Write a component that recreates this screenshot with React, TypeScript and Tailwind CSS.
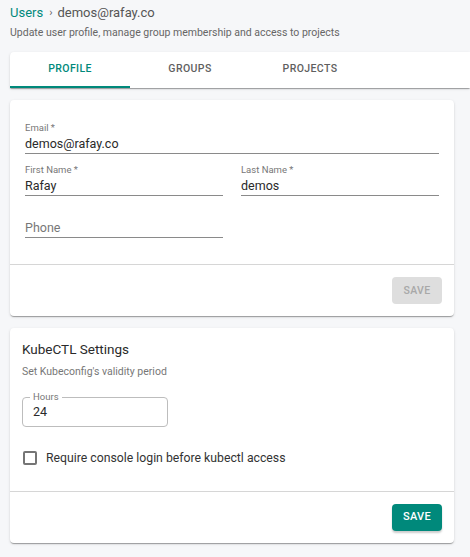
import { FC } from "react";

const cardShadow =
  "shadow-[0_2px_1px_-1px_rgba(0,0,0,0.2),0_1px_1px_0_rgba(0,0,0,0.14),0_1px_3px_0_rgba(0,0,0,0.12)]";

interface FieldProps {
  label?: string;
  value?: string;
  placeholder?: string;
  className?: string;
}

const UnderlineField: FC<FieldProps> = ({ label, value, placeholder, className }) => (
  <div className={className}>
    <div className="h-[12px] text-[9.5px] leading-[12px] text-[#777]">{label}</div>
    <div
      className={`h-[20px] border-b border-[#8a8a8a] text-[12.5px] leading-[19px] ${
        value ? "text-[#2a2a2a]" : "text-[#777]"
      }`}
    >
      {value ?? placeholder}
    </div>
  </div>
);

const tabs = ["Profile", "Groups", "Projects"];

export default function App() {
  return (
    <div className="min-h-screen bg-[#f6f7f9] font-['Roboto',sans-serif] pl-[10px] overflow-hidden">
      {/* header */}
      <div className="pt-[4px] h-[22px] flex items-center text-[13px] leading-[18px]">
        <span className="text-[#00897b]">Users</span>
        <span className="ml-[6px] mr-[5px] text-[#666] text-[11px]">›</span>
        <span className="text-[#555]">demos@rafay.co</span>
      </div>
      <p className="mt-[4px] text-[10.5px] leading-[14px] text-[#666]">
        Update user profile, manage group membership and access to projects
      </p>

      {/* tabs */}
      <div className={`mt-[12px] h-[36px] bg-white rounded-tl-[4px] flex ${cardShadow}`}>
        {tabs.map((t, i) => (
          <div
            key={t}
            className={`w-[120px] flex items-center justify-center text-[10.5px] font-medium tracking-[0.4px] uppercase border-b-2 ${
              i === 0 ? "text-[#00897b] border-[#00897b]" : "text-[#5f5f5f] border-transparent"
            }`}
          >
            {t}
          </div>
        ))}
      </div>

      {/* profile card */}
      <div className={`mt-[12px] mr-[16px] bg-white rounded-[4px] ${cardShadow}`}>
        <div className="px-[15px] pt-[22px] pb-[26px]">
          <UnderlineField label="Email *" value="demos@rafay.co" />
          <div className="mt-[10px] grid grid-cols-2 gap-x-[18px]">
            <UnderlineField label="First Name *" value="Rafay" />
            <UnderlineField label="Last Name *" value="demos" />
          </div>
          <div className="mt-[10px] grid grid-cols-2 gap-x-[18px]">
            <UnderlineField placeholder="Phone" />
          </div>
        </div>
        <div className="border-t border-[#d6d6d6] flex justify-end px-[12px] py-[12px]">
          <button className="w-[50px] h-[27px] rounded-[4px] bg-[#dedede] text-[#a8a8a8] text-[10.5px] font-medium tracking-[0.3px]">
            SAVE
          </button>
        </div>
      </div>

      {/* kubectl card */}
      <div className={`mt-[12px] mr-[16px] bg-white rounded-[4px] ${cardShadow}`}>
        <div className="px-[12px] pt-[12px] pb-[23px]">
          <h2 className="text-[13.5px] leading-[18px] text-[#2a2a2a]">KubeCTL Settings</h2>
          <p className="mt-[7px] text-[10.5px] leading-[14px] text-[#777]">
            Set Kubeconfig's validity period
          </p>
          <fieldset className="mt-[12px] w-[146px] border border-[#bdbdbd] rounded-[4px] px-[10px] pb-[5px]">
            <legend className="px-[3px] -ml-[3px] text-[9.5px] leading-[12px] text-[#777]">
              Hours
            </legend>
            <div className="text-[12.5px] leading-[18px] text-[#2a2a2a]">24</div>
          </fieldset>
          <label className="mt-[21px] h-[20px] flex items-center pl-[1px]">
            <span className="w-[14px] h-[14px] border-2 border-[#757575] rounded-[2px]" />
            <span className="ml-[9px] text-[12.25px] text-[#333]">
              Require console login before kubectl access
            </span>
          </label>
        </div>
        <div className="border-t border-[#d6d6d6] flex justify-end px-[12px] py-[12px]">
          <button className="w-[50px] h-[27px] rounded-[4px] bg-[#00897b] text-white text-[11px] font-medium tracking-[0.3px] shadow-[0_2px_2px_rgba(0,0,0,0.2)]">
            SAVE
          </button>
        </div>
      </div>
    </div>
  );
}
